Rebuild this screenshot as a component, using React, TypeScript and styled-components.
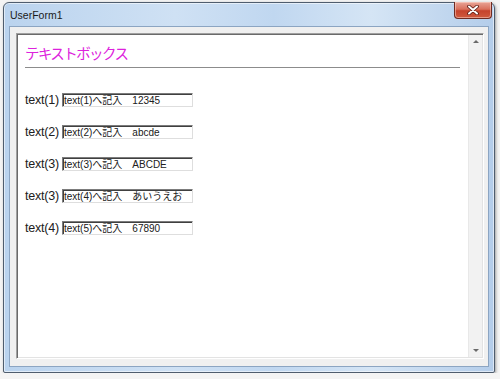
import React from "react";
import styled, { createGlobalStyle } from "styled-components";

const GlobalStyle = createGlobalStyle`
  html, body {
    margin: 0;
    padding: 0;
    background: #f4f4f4;
  }
  body {
    font-family: "Liberation Sans", "Noto Sans CJK JP", sans-serif;
  }
`;

const rows = [
  { label: "text(1)", value: "text(1)へ記入\u300012345" },
  { label: "text(2)", value: "text(2)へ記入\u3000abcde" },
  { label: "text(3)", value: "text(3)へ記入\u3000ABCDE" },
  { label: "text(3)", value: "text(4)へ記入\u3000あいうえお" },
  { label: "text(4)", value: "text(5)へ記入\u300067890" },
];

const CloseIcon = () => (
  <svg width="14" height="10" viewBox="0 0 14 10">
    <path d="M3 1.5 L11 8.5 M11 1.5 L3 8.5" stroke="#5a1a12" strokeWidth="3.6" strokeLinecap="round" />
    <path d="M3 1.5 L11 8.5 M11 1.5 L3 8.5" stroke="#ffffff" strokeWidth="2" strokeLinecap="round" />
  </svg>
);

const App = () => {
  return (
    <>
      <GlobalStyle />
      <Window>
        <TitleBar>
          <Title>UserForm1</Title>
          <CloseButton>
            <CloseIcon />
          </CloseButton>
        </TitleBar>
        <Client>
          <Frame>
            <Content>
              <Heading>テキストボックス</Heading>
              <Rule />
              <Rows>
                {rows.map((r, i) => (
                  <Row key={i}>
                    <Label>{r.label}</Label>
                    <TextBox>{r.value}</TextBox>
                  </Row>
                ))}
              </Rows>
            </Content>
            <ScrollBar>
              <Arrow direction="up" />
              <Arrow direction="down" />
            </ScrollBar>
          </Frame>
        </Client>
      </Window>
    </>
  );
};

const Window = styled.div`
  box-sizing: border-box;
  margin: 2px 0 0 3px;
  width: 492px;
  height: 371px;
  border: 1px solid #4f5d6e;
  border-radius: 6px 6px 2px 2px;
  background: linear-gradient(
    to right,
    #bad3ee 0%,
    #cfe1f4 35%,
    #c0d7f0 55%,
    #d5e5f5 75%,
    #b4cdea 100%
  );
  box-shadow: 1px 1px 3px rgba(0, 0, 0, 0.35), inset 0 0 0 1px rgba(255, 255, 255, 0.55);
  padding: 0 5px 5px 5px;
  display: flex;
  flex-direction: column;
`;

const TitleBar = styled.div`
  height: 23px;
  display: flex;
  align-items: flex-start;
`;

const Title = styled.div`
  margin: 6px 0 0 1px;
  font-family: "Liberation Sans", sans-serif;
  font-size: 10.5px;
  line-height: 13px;
  color: #1a1a1a;
`;

const CloseButton = styled.div`
  box-sizing: border-box;
  margin: -1px -3px 0 auto;
  width: 38px;
  height: 17px;
  border: 1px solid #6e2b22;
  border-top: none;
  border-radius: 0 0 4px 4px;
  background: linear-gradient(to bottom, #e8a597 0%, #d9705c 45%, #c5432c 55%, #cf5a3e 100%);
  box-shadow: inset 0 0 0 1px rgba(255, 220, 210, 0.5);
  display: flex;
  align-items: center;
  justify-content: center;
`;

const Client = styled.div`
  flex: 1;
  display: flex;
  background: #f0f0f0;
  border: 1px solid #8ca5c2;
  padding: 6px 4px 7px 6px;
`;

const Frame = styled.div`
  flex: 1;
  display: flex;
  border-top: 1px solid #a0a0a0;
  border-left: 1px solid #a0a0a0;
  border-bottom: 1px solid #ffffff;
  border-right: 1px solid #ffffff;
  box-shadow: inset 1px 1px 0 #6a6a6a, inset -1px -1px 0 #e3e3e3;
  padding: 1px;
`;

const Content = styled.div`
  flex: 1;
  background: #ffffff;
  padding: 9px 0 0 7px;
`;

const Heading = styled.h1`
  margin: 0;
  font-family: "Noto Sans CJK JP", sans-serif;
  font-weight: normal;
  font-size: 14.5px;
  line-height: 18px;
  letter-spacing: -1.6px;
  color: #dd22dd;
`;

const Rule = styled.div`
  margin-top: 5px;
  width: 435px;
  height: 1px;
  background: #8c8c8c;
`;

const Rows = styled.div`
  margin-top: 25px;
  display: flex;
  flex-direction: column;
  gap: 18px;
`;

const Row = styled.div`
  display: flex;
  align-items: center;
  height: 14px;
`;

const Label = styled.span`
  width: 37px;
  font-family: "Liberation Sans", "Noto Sans CJK JP", sans-serif;
  font-size: 12.5px;
  color: #202020;
  white-space: nowrap;
  letter-spacing: -0.2px;
`;

const TextBox = styled.div`
  box-sizing: border-box;
  width: 131px;
  height: 14px;
  border-top: 1px solid #7c7c7c;
  border-left: 1px solid #7c7c7c;
  border-bottom: 1px solid #dedede;
  border-right: 1px solid #dedede;
  box-shadow: inset 1px 1px 0 #404040;
  padding: 1px 0 0 1px;
  font-family: "Liberation Sans", "Noto Sans CJK JP", sans-serif;
  font-size: 10px;
  line-height: 11px;
  color: #202020;
  white-space: pre;
  overflow: hidden;
`;

const ScrollBar = styled.div`
  width: 13px;
  background: #f2f2f2;
  border-left: 1px solid #e8e8e8;
  display: flex;
  flex-direction: column;
  justify-content: space-between;
  align-items: center;
  padding: 5px 0 5px;
`;

const Arrow = styled.div<{ direction: "up" | "down" }>`
  width: 0;
  height: 0;
  border-left: 3px solid transparent;
  border-right: 3px solid transparent;
  ${(p) =>
    p.direction === "up"
      ? "border-bottom: 3px solid #6a6a6a;"
      : "border-top: 3px solid #6a6a6a;"}
`;

export default App;
